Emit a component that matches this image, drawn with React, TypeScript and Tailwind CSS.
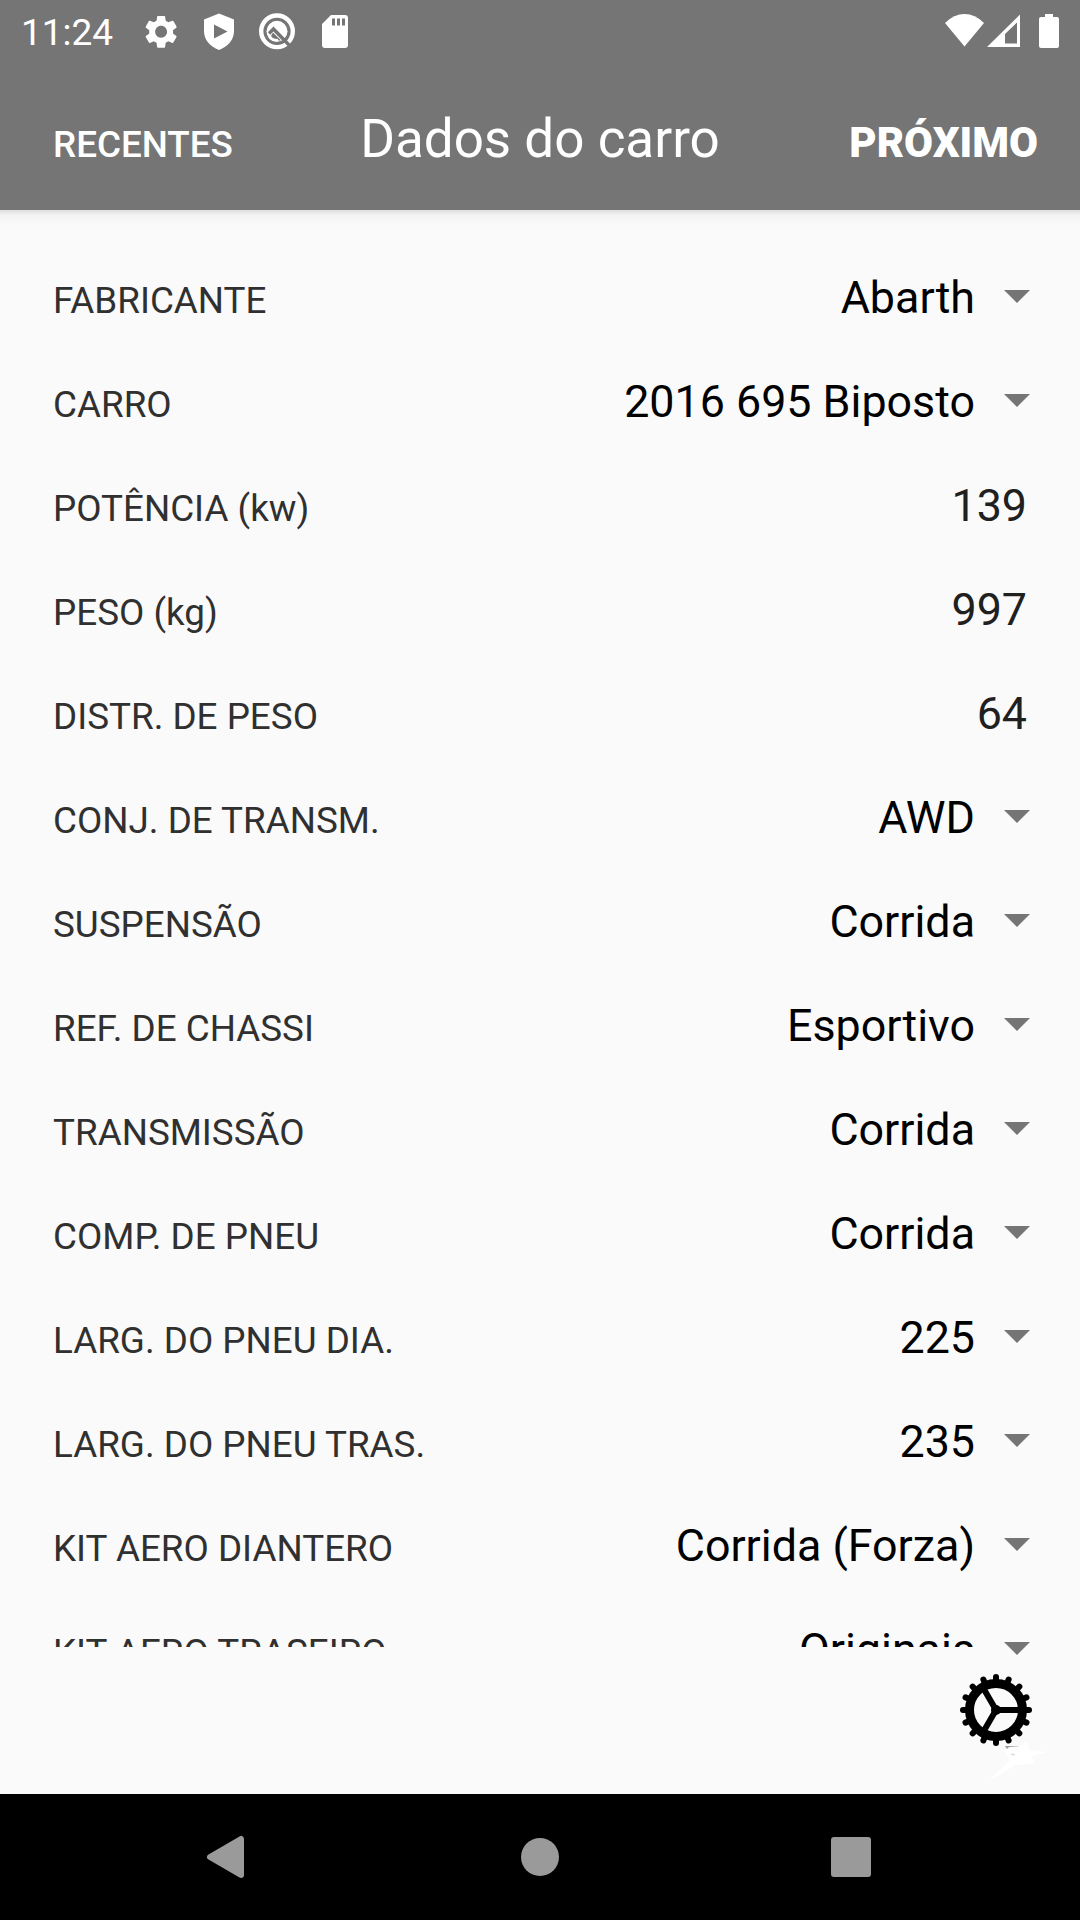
import React from 'react';

type Field = {
  label: string;
  value: string;
  select?: boolean;
};

const fields: Field[] = [
  { label: 'FABRICANTE', value: 'Abarth', select: true },
  { label: 'CARRO', value: '2016 695 Biposto', select: true },
  { label: 'POTÊNCIA (kw)', value: '139' },
  { label: 'PESO (kg)', value: '997' },
  { label: 'DISTR. DE PESO', value: '64' },
  { label: 'CONJ. DE TRANSM.', value: 'AWD', select: true },
  { label: 'SUSPENSÃO', value: 'Corrida', select: true },
  { label: 'REF. DE CHASSI', value: 'Esportivo', select: true },
  { label: 'TRANSMISSÃO', value: 'Corrida', select: true },
  { label: 'COMP. DE PNEU', value: 'Corrida', select: true },
  { label: 'LARG. DO PNEU DIA.', value: '225', select: true },
  { label: 'LARG. DO PNEU TRAS.', value: '235', select: true },
  { label: 'KIT AERO DIANTERO', value: 'Corrida (Forza)', select: true },
  { label: 'KIT AERO TRASEIRO', value: 'Originais', select: true },
];

const StatusBar: React.FC = () => (
  <div className="h-[63px] flex items-start text-white">
    <span className="pl-[21px] w-[144px] text-[37px] leading-[44px] pt-[11px]">11:24</span>
    <svg className="w-[216px] h-[63px]" viewBox="144 0 216 63" fill="currentColor">
      {/* Settings */}
      <path
        transform="translate(141.2 11.9) scale(1.66)"
        d="M19.14 12.94c.04-.3.06-.61.06-.94 0-.32-.02-.64-.07-.94l2.03-1.58a.49.49 0 0 0 .12-.61l-1.92-3.32a.488.488 0 0 0-.59-.22l-2.39.96c-.5-.38-1.03-.7-1.62-.94l-.36-2.54a.484.484 0 0 0-.48-.41h-3.84c-.24 0-.43.17-.47.41l-.36 2.54c-.59.24-1.13.57-1.62.94l-2.39-.96c-.22-.08-.47 0-.59.22L2.74 8.87c-.12.21-.08.47.12.61l2.03 1.58c-.05.3-.09.63-.09.94s.02.64.07.94l-2.03 1.58a.49.49 0 0 0-.12.61l1.92 3.32c.12.22.37.29.59.22l2.39-.96c.5.38 1.03.7 1.62.94l.36 2.54c.05.24.24.41.48.41h3.84c.24 0 .44-.17.47-.41l.36-2.54c.59-.24 1.13-.56 1.62-.94l2.39.96c.22.08.47 0 .59-.22l1.92-3.32c.12-.22.07-.47-.12-.61l-2.01-1.58zM12 15.6c-1.98 0-3.6-1.62-3.6-3.6s1.62-3.6 3.6-3.6 3.6 1.62 3.6 3.6-1.62 3.6-3.6 3.6z"
      />
      {/* Play protect */}
      <path
        fillRule="evenodd"
        d="M219 13.5 234 19.5V31c0 9-6 15.5-15 19-9-3.500-15-10-15-19V19.5zM214 24.5v14L227.5 31.5z"
      />
      {/* Search badge */}
      <circle cx="277" cy="31.3" r="15.8" fill="none" stroke="currentColor" strokeWidth="4.4" />
      <circle cx="277" cy="31.3" r="10.5" />
      <path d="m269 33.5 4.500-4.500L290 46" fill="none" stroke="#757575" strokeWidth="3.4" />
      <path d="M273 32.5 281 40.5Q274 41 271 36z" fill="#757575" />
      <path d="M269 36Q272 41 278 40" fill="none" stroke="currentColor" strokeWidth="2.500" />
      {/* SD card */}
      <path
        fillRule="evenodd"
        d="M331 15h14a3 3 0 0 1 3 3v27a3 3 0 0 1-3 3h-20a3 3 0 0 1-3-3V24zM332 18.5v7h3v-7zM337 18.5v7h3v-7zM342 18.5v7h3v-7z"
      />
    </svg>
    <svg className="ml-auto w-[140px] h-[63px]" viewBox="940 0 140 63" fill="currentColor">
      <path d="M964.5 46.5 945 23q9-9 19.5-9T984 23z" />
      <path fillRule="evenodd" d="M987 47 1020 14.5V47zM1005 34v9.5h12V22.5z" />
      <path d="M1045 14h8v3h4a2 2 0 0 1 2 2v27a2 2 0 0 1-2 2h-16a2 2 0 0 1-2-2V19a2 2 0 0 1 2-2h4z" />
    </svg>
  </div>
);

const AppBar: React.FC = () => (
  <div className="h-[147px] pl-[53px] pr-[42px] pt-[50px] flex items-baseline justify-between text-white whitespace-nowrap">
    <button className="w-[214px] text-left text-[36.8px] leading-[52px] font-medium">RECENTES</button>
    <h1 className="text-[53px] leading-[52px]">Dados do carro</h1>
    <button className="w-[225px] flex justify-end text-[42px] leading-[52px] font-black">PRÓXIMO</button>
  </div>
);

const FieldRow: React.FC<Field> = ({ label, value, select }) => (
  <div className="h-[104px] shrink-0 last:h-[49px] pl-[53px] pr-[50px] flex items-start">
    <div className="flex-1 h-full overflow-hidden pt-[26px] flex items-baseline justify-between whitespace-nowrap">
      <span className="text-[36.8px] leading-[52px] text-[#303030]">{label}</span>
      <span className={`text-[44.8px] leading-[52px] ${select ? 'text-black' : 'text-[#202020] pr-[3px]'}`}>
        {value}
      </span>
    </div>
    {select && (
      <svg className="ml-[29px] mt-[44px] w-[26px] h-[13px] shrink-0" viewBox="0 0 26 13" fill="#757575">
        <path d="M0 0h26L13 13z" />
      </svg>
    )}
  </div>
);

const teeth = Array.from({ length: 16 }, (_, i) => i * 22.5);

const WheelButton: React.FC = () => (
  <button className="w-[100px] h-[130px]">
    <svg className="w-[100px] h-[130px]" viewBox="956 1664 100 130" fill="none" stroke="#000">
      <circle cx="996" cy="1710" r="26.5" strokeWidth="9" />
      <g strokeWidth="6" strokeLinecap="round">
        {teeth.map((angle) => (
          <path key={angle} d="M996 1680v-3" transform={`rotate(${angle} 996 1710)`} />
        ))}
      </g>
      <path d="M996 1710h26M996 1710l-12.5-21.5M996 1710l-12.5 21.5" strokeWidth="6" />
      <circle cx="996" cy="1710" r="5" fill="#000" stroke="none" />
      <path d="M1005 1746h16l-12 1-2 2z" fill="#999" stroke="none" />
      <path
        d="m988 1781 22-20-6-11 14-3 9-6 3 9 17 2-15 4 2 8-19 1-14 9z"
        fill="#fff"
        stroke="none"
      />
      <path d="m1011 1754 4 1" stroke="#ddd" strokeWidth="1.5" />
    </svg>
  </button>
);

const NavigationBar: React.FC = () => (
  <div className="h-[126px] bg-black">
    <svg className="w-full h-full" viewBox="0 1794 1080 126" fill="#9a9a9a">
      <path d="M241 1839v36l-31-18z" stroke="#9a9a9a" strokeWidth="6" strokeLinejoin="round" />
      <circle cx="540" cy="1857" r="19" />
      <rect x="831" y="1837" width="40" height="40" rx="3" />
    </svg>
  </div>
);

const App: React.FC = () => {
  return (
    <div className="w-[1080px] h-[1920px] flex flex-col overflow-hidden bg-[#fafafa] font-[Roboto,sans-serif]">
      <header className="h-[210px] shrink-0 bg-[#757575]">
        <StatusBar />
        <AppBar />
      </header>
      {/* Header shadow */}
      <div className="h-[15px] shrink-0 bg-linear-to-b from-[#dedede] via-[#f3f3f3] via-35% to-[#fafafa]" />

      <main className="h-[1422px] shrink-0 pt-[21px] flex flex-col">
        {fields.map((field) => (
          <FieldRow key={field.label} {...field} />
        ))}
      </main>

      <div className="h-[147px] shrink-0 pr-[24px] flex items-end justify-end">
        <WheelButton />
      </div>
      <NavigationBar />
    </div>
  );
};

export default App;
